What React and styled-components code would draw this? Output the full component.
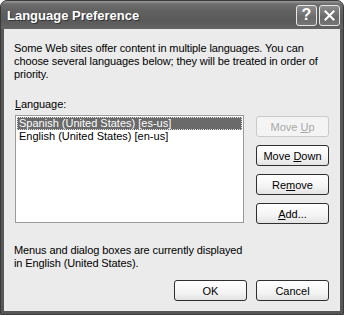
import styled, { createGlobalStyle } from "styled-components";

const Global = createGlobalStyle`
  html, body {
    margin: 0;
    padding: 0;
    background: #ffffff;
  }
  body {
    font-family: "Liberation Sans", Arial, sans-serif;
    font-size: 11px;
    color: #000;
  }
`;

const Window = styled.div`
  width: 344px;
  height: 315px;
  box-sizing: border-box;
  display: flex;
  flex-direction: column;
  background: #575757;
  border-radius: 7px 7px 0 0;
  border: 1px solid #3a3a3a;
  overflow: hidden;
`;

const TitleBar = styled.div`
  height: 28px;
  flex: none;
  display: flex;
  align-items: center;
  padding: 0 3px 0 6px;
  background: linear-gradient(
    to bottom,
    #9a9a9a 0px,
    #6e6e6e 3px,
    #606060 10px,
    #5a5a5a 20px,
    #646464 28px
  );
`;

const Title = styled.div`
  flex: 1;
  color: #fff;
  font-family: "Liberation Sans", Arial, sans-serif;
  font-weight: bold;
  font-size: 13px;
  text-shadow: 1px 1px 0 #333;
  padding-top: 1px;
`;

const CaptionButtons = styled.div`
  display: flex;
  gap: 2px;
`;

const CaptionButton = styled.div`
  width: 19px;
  height: 19px;
  border: 1px solid #e6e6e6;
  border-radius: 3px;
  background: linear-gradient(to bottom, #8c8c8c, #6a6a6a 60%, #757575);
  display: flex;
  align-items: center;
  justify-content: center;
  color: #fff;
  font-weight: bold;
  font-size: 16px;
  font-family: "Liberation Sans", Arial, sans-serif;
`;

const Body = styled.div`
  flex: 1;
  margin: 0 3px 3px 3px;
  background: #ebebeb;
  padding: 13px 11px 0 9px;
  display: flex;
  flex-direction: column;
`;

const Text = styled.div`
  line-height: 13px;
  letter-spacing: -0.1px;
  margin-top: ${(p) => p.$mt || 0}px;
  margin-left: ${(p) => p.$ml || 0}px;
`;

const Key = styled.span`
  text-decoration: underline;
  text-underline-offset: 1px;
`;

const ListRow = styled.div`
  display: flex;
  gap: 12px;
  margin-top: 4px;
  margin-left: 2px;
`;

const ListBox = styled.div`
  width: 229px;
  height: 108px;
  box-sizing: border-box;
  border: 1px solid #9a9a9a;
  background: #fff;
  padding: 1px;
`;

const ListItem = styled.div`
  height: 13px;
  line-height: 13px;
  padding-left: 2px;
  box-sizing: border-box;
  color: ${(p) => (p.$selected ? "#fff" : "#000")};
  background: ${(p) => (p.$selected ? "#6a6a6a" : "transparent")};
  outline: ${(p) => (p.$selected ? "1px dotted #ddd" : "none")};
  outline-offset: -1px;
  white-space: nowrap;
`;

const ButtonCol = styled.div`
  display: flex;
  flex-direction: column;
  gap: 8px;
  padding-top: 1px;
`;

const Button = styled.div`
  width: 73px;
  height: 21px;
  box-sizing: border-box;
  border: 1px solid ${(p) => (p.$disabled ? "#cacaca" : "#2f2f2f")};
  border-radius: 3px;
  background: ${(p) =>
    p.$disabled
      ? "#f4f4f4"
      : "linear-gradient(to bottom, #ffffff, #f4f4f4 60%, #e3e3e3)"};
  color: ${(p) => (p.$disabled ? "#a8a8a8" : "#000")};
  display: flex;
  align-items: center;
  justify-content: center;
  white-space: nowrap;
`;

const Footer = styled.div`
  display: flex;
  justify-content: flex-end;
  gap: 9px;
  margin-top: 10px;
`;

export default function App() {
  return (
    <>
      <Global />
      <Window>
        <TitleBar>
          <Title>Language Preference</Title>
          <CaptionButtons>
            <CaptionButton>?</CaptionButton>
            <CaptionButton>
              <svg width="11" height="11" viewBox="0 0 11 11">
                <path
                  d="M1.5 1.5 L9.5 9.5 M9.5 1.5 L1.5 9.5"
                  stroke="#fff"
                  strokeWidth="2"
                  strokeLinecap="square"
                />
              </svg>
            </CaptionButton>
          </CaptionButtons>
        </TitleBar>
        <Body>
          <Text $ml={1}>
            Some Web sites offer content in multiple languages. You can
            <br />
            choose several languages below; they will be treated in order of
            <br />
            priority.
          </Text>
          <Text $mt={17} $ml={2}>
            <Key>L</Key>anguage:
          </Text>
          <ListRow>
            <ListBox>
              <ListItem $selected>Spanish (United States) [es-us]</ListItem>
              <ListItem>English (United States) [en-us]</ListItem>
            </ListBox>
            <ButtonCol>
              <Button $disabled>
                Move&nbsp;<Key>U</Key>p
              </Button>
              <Button>
                Move&nbsp;<Key>D</Key>own
              </Button>
              <Button>
                Re<Key>m</Key>ove
              </Button>
              <Button>
                <Key>A</Key>dd...
              </Button>
            </ButtonCol>
          </ListRow>
          <Text $mt={20} $ml={1}>
            Menus and dialog boxes are currently displayed
            <br />
            in English (United States).
          </Text>
          <Footer>
            <Button>OK</Button>
            <Button>Cancel</Button>
          </Footer>
        </Body>
      </Window>
    </>
  );
}
